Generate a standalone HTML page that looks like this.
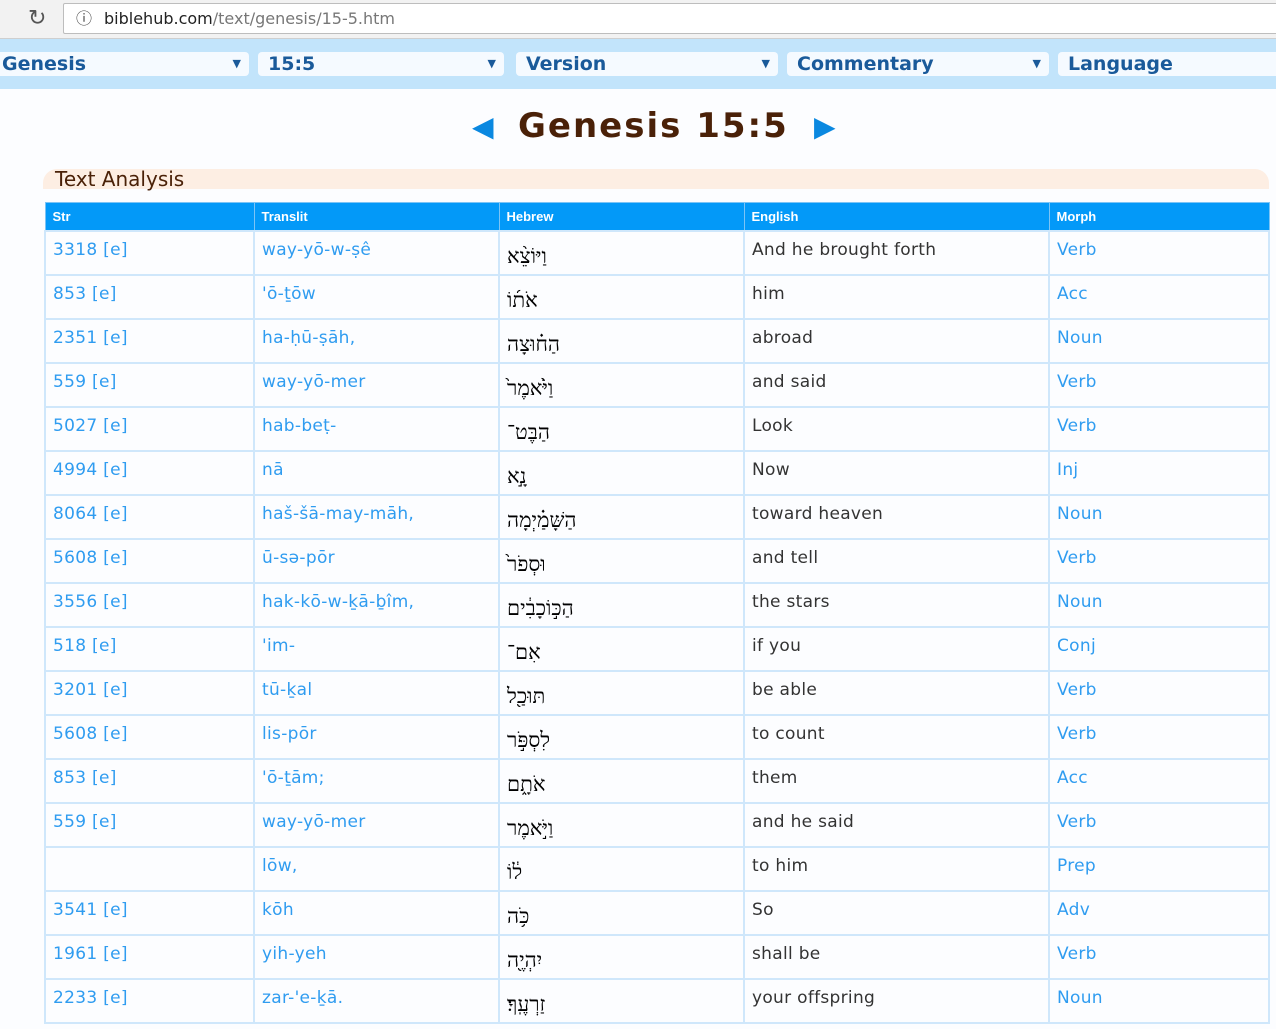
<!DOCTYPE html>
<html><head><meta charset="utf-8"><style>
*{margin:0;padding:0;box-sizing:border-box}
body{width:1276px;height:1029px;overflow:hidden;background:#fcfdff;font-family:"Liberation Sans",sans-serif;position:relative}
#bar{position:absolute;left:0;top:0;width:1276px;height:39px;background:#f2f2f2;border-bottom:1px solid #cfcfcf}
#url{position:absolute;left:63px;top:3px;width:1220px;height:31px;background:#fff;border:1px solid #bdbdbd;border-radius:2px;font-size:17px;line-height:29px;padding-left:40px;color:#777;font-family:"DejaVu Sans",sans-serif;font-size:16px}
#url b{font-weight:normal;color:#222}
#nav{position:absolute;left:0;top:39px;width:1276px;height:50px;background:#c2e4fb}
.sel{position:absolute;top:13px;height:24px;background:#f5faff;border-radius:4px;color:#1a5a9a;font-weight:bold;font-size:19px;line-height:24px;padding-left:10px;font-family:"DejaVu Sans",sans-serif}
.sel i{position:absolute;right:8px;top:0;font-style:normal;font-size:11px}
#title{position:absolute;left:518px;top:106px;font-size:34px;font-weight:bold;color:#4a2108;letter-spacing:2px;font-family:"DejaVu Sans",sans-serif;white-space:nowrap}
.ar{position:absolute;color:#0a88e0;font-size:28px;top:110px;font-family:"DejaVu Sans",sans-serif}
#ta{position:absolute;left:43px;top:169px;width:1226px;height:20px;background:#fdeee3;border-radius:14px 14px 0 0;font-size:20px;color:#4a2108;padding-left:12px;line-height:20px;font-family:"DejaVu Sans",sans-serif}
table{position:absolute;left:44px;top:202px;width:1224px;border-collapse:collapse;table-layout:fixed}
th{background:#0399f8;color:#fff;font-size:13px;text-align:left;height:28px;padding-left:7px;border:1px solid #7cc4f6}
td{height:44px;border:2px solid #cfe7fb;vertical-align:top;padding:8px 0 0 7px;font-size:17px;color:#2f9cf0;font-family:"DejaVu Sans",sans-serif;letter-spacing:.3px}
td.e{color:#333}
td.h{color:#000;font-family:"Liberation Serif","DejaVu Serif",serif;font-size:21px;padding-top:12px;letter-spacing:0}
</style></head><body>
<div id="bar"><span style="position:absolute;left:28px;top:5px;font-size:22px;color:#555">&#x21bb;</span><div id="url"><span style="position:absolute;left:12px;top:0;color:#444">&#9432;</span><b>biblehub.com</b>/text/genesis/15-5.htm</div></div>
<div id="nav">
<div class="sel" style="left:-8px;width:257px">Genesis<i>▼</i></div>
<div class="sel" style="left:258px;width:246px">15:5<i>▼</i></div>
<div class="sel" style="left:516px;width:262px">Version<i>▼</i></div>
<div class="sel" style="left:787px;width:262px">Commentary<i>▼</i></div>
<div class="sel" style="left:1058px;width:230px">Language</div>
</div>
<span class="ar" style="left:472px">◀</span>
<div id="title">Genesis 15:5</div>
<span class="ar" style="left:814px">▶</span>
<div id="ta">Text Analysis</div>
<table>
<colgroup><col style="width:209px"><col style="width:245px"><col style="width:245px"><col style="width:305px"><col style="width:220px"></colgroup>
<tr><th>Str</th><th>Translit</th><th>Hebrew</th><th>English</th><th>Morph</th></tr>
<tr><td>3318 [e]</td><td>way-yō-w-ṣê</td><td class="h">וַיּוֹצֵ֨א</td><td class="e">And he brought forth</td><td>Verb</td></tr>
<tr><td>853 [e]</td><td>'ō-ṯōw</td><td class="h">אֹת֜וֹ</td><td class="e">him</td><td>Acc</td></tr>
<tr><td>2351 [e]</td><td>ha-ḥū-ṣāh,</td><td class="h">הַח֗וּצָה</td><td class="e">abroad</td><td>Noun</td></tr>
<tr><td>559 [e]</td><td>way-yō-mer</td><td class="h">וַיֹּ֙אמֶר֙</td><td class="e">and said</td><td>Verb</td></tr>
<tr><td>5027 [e]</td><td>hab-beṭ-</td><td class="h">הַבֶּט־</td><td class="e">Look</td><td>Verb</td></tr>
<tr><td>4994 [e]</td><td>nā</td><td class="h">נָ֣א</td><td class="e">Now</td><td>Inj</td></tr>
<tr><td>8064 [e]</td><td>haš-šā-may-māh,</td><td class="h">הַשָּׁמַ֗יְמָה</td><td class="e">toward heaven</td><td>Noun</td></tr>
<tr><td>5608 [e]</td><td>ū-sə-pōr</td><td class="h">וּסְפֹר֙</td><td class="e">and tell</td><td>Verb</td></tr>
<tr><td>3556 [e]</td><td>hak-kō-w-ḵā-ḇîm,</td><td class="h">הַכּ֣וֹכָבִ֔ים</td><td class="e">the stars</td><td>Noun</td></tr>
<tr><td>518 [e]</td><td>'im-</td><td class="h">אִם־</td><td class="e">if you</td><td>Conj</td></tr>
<tr><td>3201 [e]</td><td>tū-ḵal</td><td class="h">תּוּכַ֖ל</td><td class="e">be able</td><td>Verb</td></tr>
<tr><td>5608 [e]</td><td>lis-pōr</td><td class="h">לִסְפֹּ֣ר</td><td class="e">to count</td><td>Verb</td></tr>
<tr><td>853 [e]</td><td>'ō-ṯām;</td><td class="h">אֹתָ֑ם</td><td class="e">them</td><td>Acc</td></tr>
<tr><td>559 [e]</td><td>way-yō-mer</td><td class="h">וַיֹּ֣אמֶר</td><td class="e">and he said</td><td>Verb</td></tr>
<tr><td></td><td>lōw,</td><td class="h">ל֔וֹ</td><td class="e">to him</td><td>Prep</td></tr>
<tr><td>3541 [e]</td><td>kōh</td><td class="h">כֹּ֥ה</td><td class="e">So</td><td>Adv</td></tr>
<tr><td>1961 [e]</td><td>yih-yeh</td><td class="h">יִהְיֶ֖ה</td><td class="e">shall be</td><td>Verb</td></tr>
<tr><td>2233 [e]</td><td>zar-'e-ḵā.</td><td class="h">זַרְעֶֽךָ׃</td><td class="e">your offspring</td><td>Noun</td></tr>
</table>
</body></html>
